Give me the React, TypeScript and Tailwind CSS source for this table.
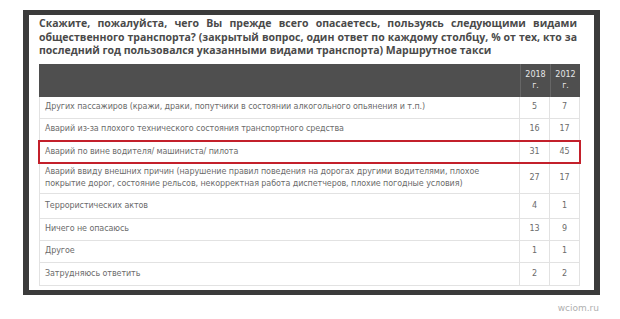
import React from "react";

interface Row {
  label: string[];
  y2018: string;
  y2012: string;
  h: string;
  highlight?: boolean;
}

const rows: Row[] = [
  { label: ["Других пассажиров (кражи, драки, попутчики в состоянии алкогольного опьянения и т.п.)"], y2018: "5", y2012: "7", h: "h-[22px]" },
  { label: ["Аварий из-за плохого технического состояния транспортного средства"], y2018: "16", y2012: "17", h: "h-[22px]" },
  { label: ["Аварий по вине водителя/ машиниста/ пилота"], y2018: "31", y2012: "45", h: "h-[23px]", highlight: true },
  {
    label: [
      "Аварий ввиду внешних причин (нарушение правил поведения на дорогах другими водителями, плохое",
      "покрытие дорог, состояние рельсов, некорректная работа диспетчеров, плохие погодные условия)",
    ],
    y2018: "27",
    y2012: "17",
    h: "h-[30px]",
  },
  { label: ["Террористических актов"], y2018: "4", y2012: "1", h: "h-[25px]" },
  { label: ["Ничего не опасаюсь"], y2018: "13", y2012: "9", h: "h-[22px]" },
  { label: ["Другое"], y2018: "1", y2012: "1", h: "h-[22px]" },
  { label: ["Затрудняюсь ответить"], y2018: "2", y2012: "2", h: "h-[23px]" },
];

const App: React.FC = () => {
  return (
    <div className="w-[620px] h-[319px] bg-white relative overflow-hidden">
      <div className="ml-[23px] mt-[10px] w-[577px] h-[285px] border-[6px] border-y-[5px] border-[#3b3b3b] bg-white pl-[10px] pr-[14px] pt-[2px]">
        {/* Question */}
        <p
          className="text-[10.5px] leading-[13.5px] font-bold text-[#4a4a4a] text-justify pr-[3px]"
          style={{ fontFamily: '"Open Sans", "Noto Sans", sans-serif', textAlignLast: "left" }}
        >
          Скажите, пожалуйста, чего Вы прежде всего опасаетесь, пользуясь следующими видами общественного транспорта? (закрытый вопрос, один ответ по каждому столбцу, % от тех, кто за последний год пользовался указанными видами транспорта) Маршрутное такси
        </p>

        {/* Table */}
        <div
          className="mt-[6px] w-[541px] text-[#6b6b6b]"
          style={{ fontFamily: '"DejaVu Sans", Verdana, sans-serif' }}
        >
          <div className="flex h-[33px] bg-[#4f4f4f]">
            <div className="flex-1" />
            <div className="w-[30px] border-l border-[#666] flex flex-col items-center justify-center text-[8px] leading-[11px] text-[#e6e6e6]">
              <span>2018</span>
              <span>г.</span>
            </div>
            <div className="w-[30px] border-l border-[#666] flex flex-col items-center justify-center text-[8px] leading-[11px] text-[#e6e6e6]">
              <span>2012</span>
              <span>г.</span>
            </div>
          </div>
          {rows.map((r, i) => (
            <div
              key={i}
              className={`relative flex ${r.h} border-x border-b border-[#e2e2e2] text-[8px]`}
            >
              <div className="flex-1 flex flex-col justify-center pl-[5px] leading-[12px] tracking-[-0.08px] whitespace-nowrap">
                {r.label.map((l, j) => (
                  <span key={j}>{l}</span>
                ))}
              </div>
              <div className="w-[30px] border-l border-[#e2e2e2] flex items-center justify-center">{r.y2018}</div>
              <div className="w-[30px] border-l border-[#e2e2e2] flex items-center justify-center">{r.y2012}</div>
              {r.highlight && (
                <div className="absolute -left-[2px] -right-[2px] -top-[1px] -bottom-[1px] border-2 border-[#c3202b]" />
              )}
            </div>
          ))}
        </div>
      </div>
      <div
        className="absolute right-[21px] top-[302px] text-[9px] text-[#b0b0b0]"
        style={{ fontFamily: '"DejaVu Sans", Verdana, sans-serif' }}
      >
        wciom.ru
      </div>
    </div>
  );
};

export default App;
